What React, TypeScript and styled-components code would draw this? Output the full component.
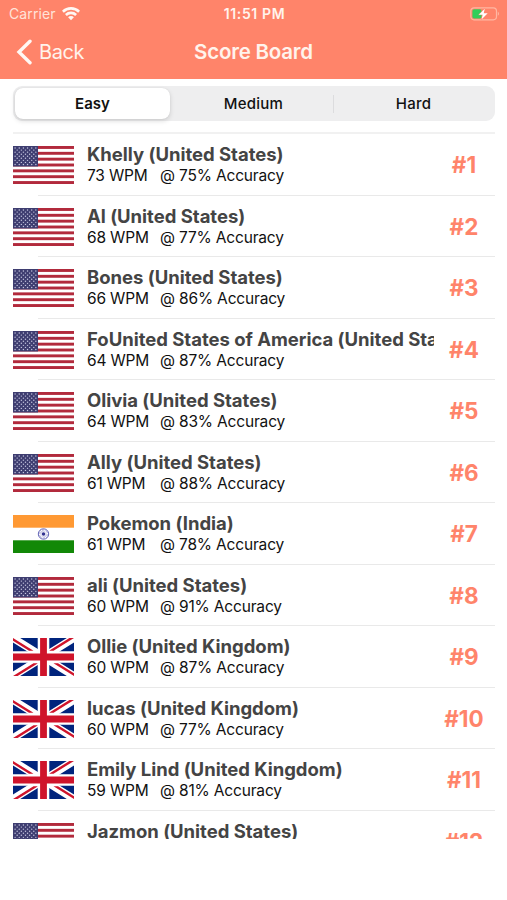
import React from "react";
import styled, { createGlobalStyle } from "styled-components";

const CORAL = "#ff846a";

const GlobalStyle = createGlobalStyle`
  * { box-sizing: border-box; }
  body {
    margin: 0;
    background: #fff;
    font-family: Inter, "Liberation Sans", sans-serif;
    color: #111;
    overflow: hidden;
  }
  svg { display: block; }
`;

const Screen = styled.main`
  width: 507px;
  height: 900px;
  overflow: hidden;
  background: #fff;
`;

const Header = styled.header`
  height: 79px;
  background: ${CORAL};
  color: #fff3ec;
`;

const StatusBar = styled.div`
  height: 27px;
  padding: 0 7px 0 9px;
  display: grid;
  grid-template-columns: 1fr auto 1fr;
  align-items: center;
`;

const Carrier = styled.div`
  display: flex;
  align-items: center;
  gap: 6px;
  font-size: 14px;
  line-height: 27px;
  letter-spacing: 0.12px;
  color: #ffe3d9;
`;

const Clock = styled.div`
  font-size: 14px;
  line-height: 27px;
  font-weight: 600;
  letter-spacing: 0.65px;
`;

const BatterySlot = styled.div`
  display: flex;
  justify-content: flex-end;
`;

const NavBar = styled.div`
  height: 50px;
  padding: 0 15px;
  display: grid;
  grid-template-columns: 1fr auto 1fr;
  align-items: center;
`;

const BackButton = styled.button`
  display: flex;
  align-items: center;
  gap: 7px;
  height: 50px;
  padding: 0;
  border: 0;
  background: none;
  color: inherit;
  font: 400 20px/50px Inter, sans-serif;
  letter-spacing: -0.4px;
`;

const Title = styled.h1`
  margin: 0;
  font-size: 20.5px;
  line-height: 50px;
  font-weight: 600;
  letter-spacing: -0.22px;
`;

const Segments = styled.div`
  margin: 7px 12px 0 13px;
  height: 35px;
  padding: 2px;
  display: grid;
  grid-template-columns: 155px 163px 1fr;
  border-radius: 9px;
  background: #eeeeef;
`;

const Segment = styled.button<{ $active?: boolean; $divided?: boolean }>`
  display: flex;
  align-items: center;
  justify-content: center;
  padding: 0 0 0 ${(p) => (p.$active || p.$divided ? "0" : "4px")};
  border: 0;
  border-radius: ${(p) => (p.$active ? "8px" : "0")};
  background: ${(p) => (p.$active ? "#fff" : "transparent")};
  box-shadow: ${(p) => (p.$active ? "0 2px 5px rgba(0,0,0,.14), 0 0 1px rgba(0,0,0,.12)" : "none")};
  color: #111;
  font: ${(p) => (p.$active ? 600 : 500)} 15px/20px Inter, sans-serif;
  letter-spacing: ${(p) => (p.$active ? "0" : "0.25px")};

  &::before {
    content: "";
    display: ${(p) => (p.$divided ? "block" : "none")};
    width: 1px;
    height: 18px;
    margin-right: auto;
    background: #dcdcde;
  }
  &::after {
    content: "";
    display: ${(p) => (p.$divided ? "block" : "none")};
    width: 0;
    margin-left: auto;
  }
`;

const List = styled.ul`
  list-style: none;
  margin: 11px 12px 0 13px;
  padding: 0;
  height: 707px;
  overflow: hidden;
  border-top: 2px solid #f1f1f1;
`;

const Row = styled.li`
  height: 61.54px;
  display: grid;
  grid-template-columns: 74px 347px 60px;
  background: linear-gradient(#e9e9e9, #e9e9e9) 25px 100% / 100% 1px no-repeat;
`;

const FlagSlot = styled.div`
  padding-top: 12px;
`;

const Details = styled.div`
  min-width: 0;
  overflow: hidden;
  padding-top: 8px;
`;

const Name = styled.div`
  font-size: 18.5px;
  line-height: 24px;
  font-weight: 650;
  color: #444;
  white-space: nowrap;
  letter-spacing: -0.02px;
`;

const Stats = styled.div`
  display: grid;
  grid-template-columns: 73px 1fr;
  font-size: 15.5px;
  line-height: 19px;
  letter-spacing: -0.17px;
  white-space: nowrap;
`;

const Rank = styled.div`
  padding-top: 1px;
  text-align: center;
  font-size: 22.5px;
  line-height: 59px;
  font-weight: 700;
  color: ${CORAL};
`;

const WifiIcon = () => (
  <svg width="18" height="14" viewBox="0 0 18 14" fill="none" stroke="#fff8f4" strokeWidth="2.6">
    <path d="M.9 4.7C5.4.3 12.6.3 17.1 4.7" />
    <path d="M3.9 8c2.9-2.8 7.3-2.8 10.2 0" />
    <path d="M6.1 10.2c1.6-1.5 4.2-1.5 5.8 0L9 13.2z" fill="#fff8f4" stroke="none" />
  </svg>
);

const BatteryIcon = () => (
  <svg width="30" height="14" viewBox="0 0 30 14">
    <rect x=".8" y=".8" width="25.7" height="12" rx="3.2" fill="none" stroke="#ffb7a3" strokeWidth="1.2" />
    <path d="M27.8 4.8c1.6.5 1.6 3.5 0 4z" fill="#ffb7a3" />
    <rect x="2.4" y="2.3" width="9.2" height="9.2" rx="1.8" fill="#32cf5a" />
    <path d="M14.8 1.8 8.7 7.7h4l-1.2 4.8 6.2-6.3h-4z" fill="#fff" stroke={CORAL} strokeWidth=".7" paintOrder="stroke" />
  </svg>
);

const BackIcon = () => (
  <svg width="17" height="28" viewBox="0 0 17 28" fill="none" stroke="#fff8f4" strokeWidth="3.4" strokeLinecap="round" strokeLinejoin="miter">
    <path d="M15 3.2 4 14l11 10.8" />
  </svg>
);

const stripes = [0, 2, 4, 6, 8, 10, 12];
const starRows = [0, 1, 2, 3, 4, 5, 6, 7, 8];

const UsFlag = () => (
  <svg width="61" height="38" viewBox="0 0 61 38">
    <rect width="61" height="38" fill="#fff" />
    {stripes.map((s) => (
      <rect key={s} y={(s * 38) / 13} width="61" height={38 / 13} fill="#b22a3c" />
    ))}
    <rect width="25" height={(38 * 7) / 13} fill="#3e3d70" />
    {starRows.map((r) =>
      Array.from({ length: r % 2 ? 5 : 6 }, (_, c) => (
        <circle key={`${r}-${c}`} cx={2.1 + c * 4.15 + (r % 2 ? 2.08 : 0)} cy={2.05 + r * 2.05} r=".72" fill="#c3c4de" />
      ))
    )}
  </svg>
);

const IndiaFlag = () => (
  <svg width="61" height="38" viewBox="0 0 61 38">
    <rect width="61" height="38" fill="#fff" />
    <rect width="61" height="12.7" fill="#ff9933" />
    <rect y="25.3" width="61" height="12.7" fill="#128807" />
    <g fill="none" stroke="#5556b0">
      <circle cx="30.5" cy="19" r="5.2" strokeWidth=".9" />
      <circle cx="30.5" cy="19" r="3.4" strokeWidth="3" strokeDasharray=".4 .9" opacity=".7" />
    </g>
    <circle cx="30.5" cy="19" r="1.7" fill="#30308f" />
  </svg>
);

const UkFlag = () => (
  <svg width="61" height="38" viewBox="0 0 61 38">
    <rect width="61" height="38" fill="#00247d" />
    <path d="M0 0 61 38M61 0 0 38" stroke="#fff" strokeWidth="7.6" />
    <g fill="#cf142b">
      <path d="M0 0 20.5 12.7H16L0 2.8zM61 0h-4.6L36 12.7h4.5zM61 38 40.5 25.3H45L61 35.2zM0 38h4.6L25 25.3h-4.5z" />
    </g>
    <path d="M30.5 0v38M0 19h61" stroke="#fff" strokeWidth="11.6" />
    <path d="M30.5 0v38M0 19h61" stroke="#cf142b" strokeWidth="6.8" />
  </svg>
);

const flags = { us: UsFlag, in: IndiaFlag, uk: UkFlag };

type Entry = { name: string; flag: keyof typeof flags; wpm: number; accuracy: number };

const entries: Entry[] = [
  { name: "Khelly (United States)", flag: "us", wpm: 73, accuracy: 75 },
  { name: "Al (United States)", flag: "us", wpm: 68, accuracy: 77 },
  { name: "Bones (United States)", flag: "us", wpm: 66, accuracy: 86 },
  { name: "FoUnited States of America (United States)", flag: "us", wpm: 64, accuracy: 87 },
  { name: "Olivia (United States)", flag: "us", wpm: 64, accuracy: 83 },
  { name: "Ally (United States)", flag: "us", wpm: 61, accuracy: 88 },
  { name: "Pokemon (India)", flag: "in", wpm: 61, accuracy: 78 },
  { name: "ali (United States)", flag: "us", wpm: 60, accuracy: 91 },
  { name: "Ollie (United Kingdom)", flag: "uk", wpm: 60, accuracy: 87 },
  { name: "lucas (United Kingdom)", flag: "uk", wpm: 60, accuracy: 77 },
  { name: "Emily Lind (United Kingdom)", flag: "uk", wpm: 59, accuracy: 81 },
  { name: "Jazmon (United States)", flag: "us", wpm: 59, accuracy: 80 },
];

export default function App() {
  return (
    <>
      <GlobalStyle />
      <Screen>
        <Header>
          <StatusBar>
            <Carrier>
              Carrier
              <WifiIcon />
            </Carrier>
            <Clock>11:51 PM</Clock>
            <BatterySlot>
              <BatteryIcon />
            </BatterySlot>
          </StatusBar>
          <NavBar>
            <BackButton>
              <BackIcon />
              Back
            </BackButton>
            <Title>Score Board</Title>
          </NavBar>
        </Header>
        <Segments>
          <Segment $active>Easy</Segment>
          <Segment>Medium</Segment>
          <Segment $divided>Hard</Segment>
        </Segments>
        <List>
          {entries.map((entry, index) => {
            const Flag = flags[entry.flag];
            return (
              <Row key={entry.name}>
                <FlagSlot>
                  <Flag />
                </FlagSlot>
                <Details>
                  <Name>{entry.name}</Name>
                  <Stats>
                    <span>{entry.wpm} WPM</span>
                    <span>@ {entry.accuracy}% Accuracy</span>
                  </Stats>
                </Details>
                <Rank>#{index + 1}</Rank>
              </Row>
            );
          })}
        </List>
      </Screen>
    </>
  );
}
